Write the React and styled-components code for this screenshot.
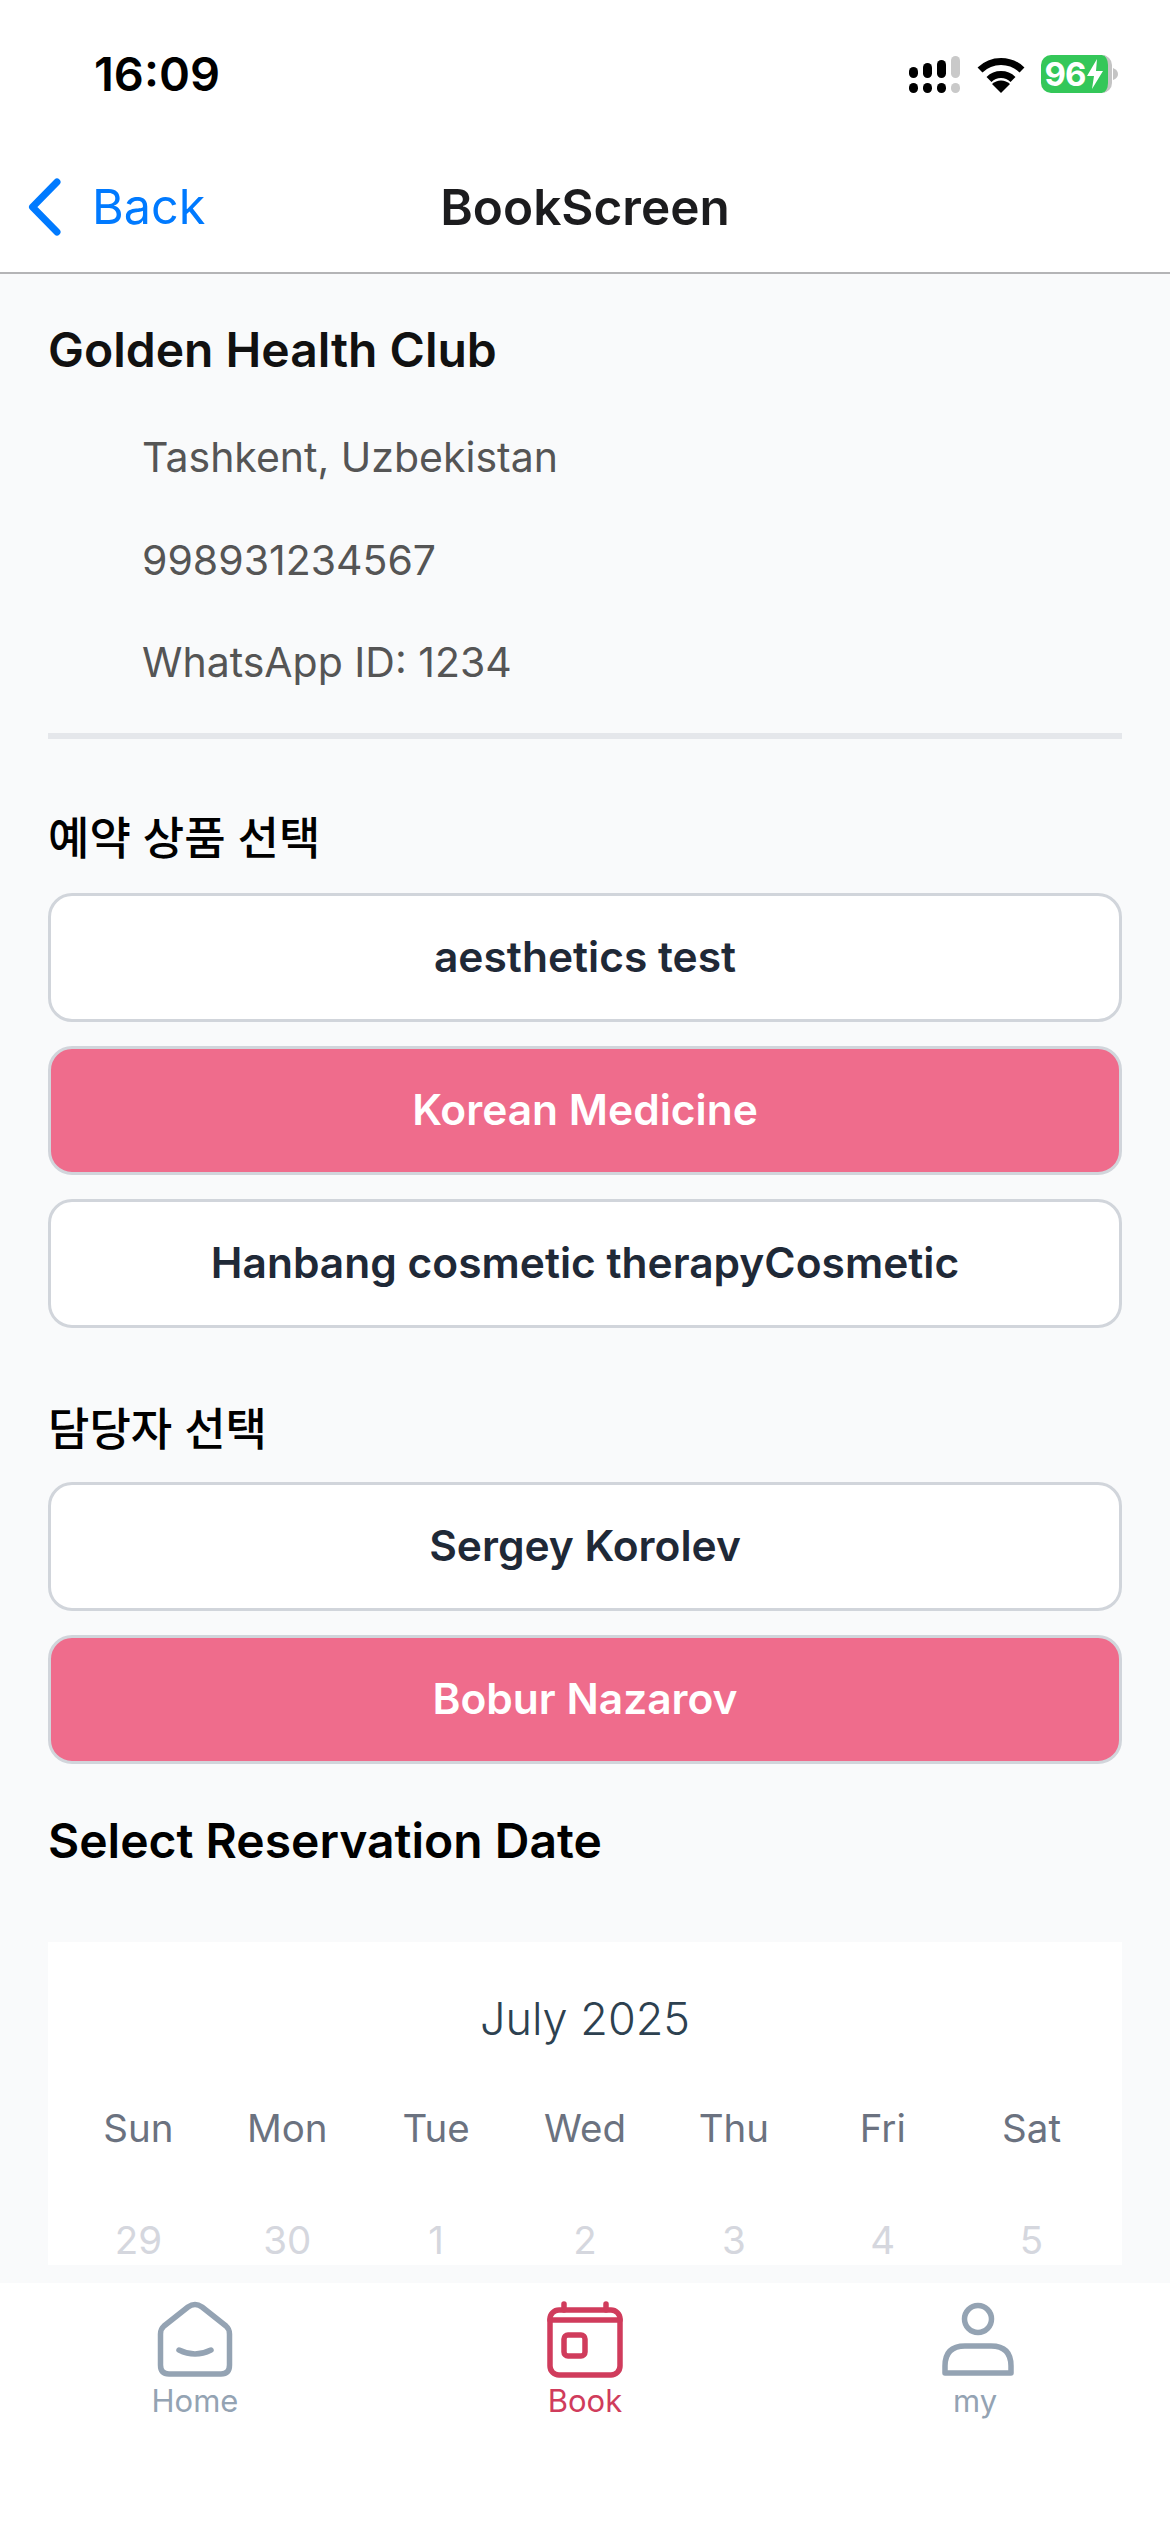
import React from "react";
import styled, { createGlobalStyle } from "styled-components";

const GlobalStyle = createGlobalStyle`
  * { box-sizing: border-box; }
  html, body { margin: 0; padding: 0; background: #fff; }
  body { font-family: Inter, "Noto Sans CJK KR", sans-serif; }
`;

const Screen = styled.div`
  width: 1170px;
  height: 2532px;
  display: flex;
  flex-direction: column;
  background: #fff;
  overflow: hidden;
`;

const StatusBar = styled.div`
  height: 148px;
  flex-shrink: 0;
  display: flex;
  justify-content: space-between;
  align-items: flex-start;
  padding: 48px 55px 0 94px;
`;

const Time = styled.span`
  font-size: 47px;
  line-height: 52px;
  font-weight: 600;
  color: #000;
`;

const StatusIcons = styled.div`
  display: flex;
  align-items: center;
  height: 52px;
  gap: 16px;
  margin-right: -3px;
`;

const Battery = styled.div`
  width: 71px;
  height: 38px;
  display: flex;
  align-items: center;
  justify-content: center;
  gap: 1px;
  margin-right: -15px;
  border-radius: 10px;
  border-right: 4px solid #c4c4c4;
  background: #34c759;
  color: #fff;
  font-size: 33px;
  font-weight: 700;
  line-height: 38px;
  letter-spacing: -1px;
`;

const NavBar = styled.div`
  height: 126px;
  flex-shrink: 0;
  display: flex;
  align-items: center;
  position: relative;
  border-bottom: 2px solid #b4b4b6;
  padding: 0 0 7px 28px;
`;

const BackLink = styled.div`
  display: flex;
  align-items: center;
  gap: 31px;
  color: #007aff;
  font-size: 48.500px;
  line-height: 60px;
`;

const NavTitle = styled.div`
  position: absolute;
  left: 0;
  right: 0;
  top: 29px;
  text-align: center;
  font-size: 49.500px;
  line-height: 60px;
  font-weight: 600;
  color: #1c1c1e;
`;

const Main = styled.main`
  flex: 1;
  min-height: 0;
  overflow: hidden;
  background: #f9fafb;
  padding: 46px 48px 0;
`;

const ClubName = styled.h1`
  margin: 0 0 50px;
  font-size: 48px;
  line-height: 60px;
  font-weight: 600;
  color: #111;
`;

const InfoRow = styled.div`
  padding-left: 94px;
  margin-bottom: 48.500px;
  font-size: 41px;
  line-height: 54px;
  color: #555;
`;

const Divider = styled.hr`
  margin: -4.500px 0 0;
  border: 0;
  height: 6px;
  background: #e5e7eb;
`;

const SectionTitle = styled.h2`
  margin: ${(p) => p.$top}px 0 ${(p) => p.$bottom}px;
  font-size: ${(p) => p.$size}px;
  line-height: 60px;
  font-weight: ${(p) => p.$weight};
  color: #000;
`;

const OptionList = styled.div`
  display: flex;
  flex-direction: column;
  gap: 24px;
`;

const OptionButton = styled.button`
  display: block;
  width: 100%;
  height: 129px;
  padding: 0 0 3px;
  border: 3px solid #d1d5db;
  border-radius: 24px;
  background: ${(p) => (p.$selected ? "#ef6c8c" : "#fff")};
  color: ${(p) => (p.$selected ? "#fff" : "#1f2937")};
  font-family: inherit;
  font-size: 42.500px;
  font-weight: 600;
`;

const Calendar = styled.section`
  margin-top: 71px;
  padding: 47px 16px 0;
  background: #fff;
`;

const MonthTitle = styled.div`
  text-align: center;
  font-size: 45px;
  line-height: 60px;
  font-weight: 300;
  color: #2d4150;
`;

const WeekGrid = styled.div`
  display: grid;
  grid-template-columns: repeat(7, 1fr);
  margin-top: ${(p) => p.$top}px;
  text-align: center;
  font-size: 38.500px;
  line-height: 50px;
  color: ${(p) => p.$color};
`;

const TabBar = styled.nav`
  height: 249px;
  flex-shrink: 0;
  display: grid;
  grid-template-columns: repeat(3, 1fr);
  align-items: start;
  padding-top: 19px;
  background: #fff;
`;

const Tab = styled.div`
  display: flex;
  flex-direction: column;
  align-items: center;
  color: ${(p) => (p.$active ? "#d03c5c" : "#94a3b3")};
  font-size: 31px;
  line-height: 36px;
  font-weight: 400;
`;

const TabIcon = styled.svg`
  width: 76px;
  height: 76px;
  margin-bottom: 5px;
  overflow: visible;
  fill: none;
  stroke: currentColor;
  stroke-width: 5.500;
  stroke-linecap: round;
  stroke-linejoin: round;
`;

const SignalIcon = () => (
  <svg width="52" height="38" viewBox="0 0 52 38">
    <rect x="0" y="12" width="9" height="11" rx="4.500" fill="#000" />
    <rect x="14" y="8" width="9" height="15" rx="4.500" fill="#000" />
    <rect x="28" y="5" width="9" height="18" rx="4.500" fill="#000" />
    <rect x="42" y="1" width="9" height="22" rx="4.500" fill="#c9c9c9" />
    <rect x="0" y="28" width="9" height="10" rx="4.500" fill="#000" />
    <rect x="14" y="28" width="9" height="10" rx="4.500" fill="#000" />
    <rect x="28" y="28" width="9" height="10" rx="4.500" fill="#000" />
    <rect x="42" y="28" width="9" height="10" rx="4.500" fill="#c9c9c9" />
  </svg>
);

const WifiIcon = () => (
  <svg width="48" height="37" viewBox="0 0 48 37" fill="none">
    <path d="M3 14 A30 30 0 0 1 45 14" stroke="#000" strokeWidth="7" />
    <path d="M12 23.500 A17 17 0 0 1 36 23.500" stroke="#000" strokeWidth="7" />
    <path d="M24 37 L15 28 A13 13 0 0 1 33 28 Z" fill="#000" />
  </svg>
);

const BoltIcon = () => (
  <svg width="18" height="30" viewBox="0 0 18 30">
    <path d="M11 0 L1 17 H8 L6 30 L17 12 H10 Z" fill="#fff" />
  </svg>
);

const BatteryNub = () => (
  <svg width="5" height="12" viewBox="0 0 5 12">
    <path d="M0 0 Q5 2 5 6 Q5 10 0 12 Z" fill="#c4c4c4" />
  </svg>
);

const ChevronLeft = () => (
  <svg width="33" height="58" viewBox="0 0 33 58" fill="none">
    <path d="M29 4 L4.500 29 L29 54" stroke="#007aff" strokeWidth="7" strokeLinecap="round" strokeLinejoin="round" />
  </svg>
);

const HomeIcon = () => (
  <TabIcon viewBox="0 0 76 76">
    <path d="M31 5 L7 24 Q3.500 27 3.500 32 V63 Q3.500 72 12 72 H64 Q72.500 72 72.500 63 V32 Q72.500 27 69 24 L45 5 Q38 0 31 5 Z" />
    <path d="M22 48 Q38 56 54 48" />
  </TabIcon>
);

const BookIcon = () => (
  <TabIcon viewBox="0 0 76 76">
    <rect x="3" y="8" width="70" height="65" rx="9" />
    <path d="M3 18 H73" />
    <path d="M17 2 V8 M59 2 V8" />
    <rect x="17" y="33" width="21" height="21" rx="4" />
  </TabIcon>
);

const PersonIcon = () => (
  <TabIcon viewBox="-5 0 76 76">
    <circle cx="36" cy="17" r="13.500" />
    <path d="M3 71 V64 Q3 44 23 44 H49 Q69 44 69 64 V71 Z" />
  </TabIcon>
);

const services = [
  { name: "aesthetics test" },
  { name: "Korean Medicine", selected: true },
  { name: "Hanbang cosmetic therapyCosmetic" },
];

const staff = [
  { name: "Sergey Korolev" },
  { name: "Bobur Nazarov", selected: true },
];

const weekDays = ["Sun", "Mon", "Tue", "Wed", "Thu", "Fri", "Sat"];
const firstWeek = [29, 30, 1, 2, 3, 4, 5];

const Options = ({ items }) => (
  <OptionList>
    {items.map((item) => (
      <OptionButton key={item.name} $selected={item.selected}>
        {item.name}
      </OptionButton>
    ))}
  </OptionList>
);

export default function App() {
  return (
    <Screen>
      <GlobalStyle />
      <StatusBar>
        <Time>16:09</Time>
        <StatusIcons>
          <SignalIcon />
          <WifiIcon />
          <Battery>
            96
            <BoltIcon />
          </Battery>
          <BatteryNub />
        </StatusIcons>
      </StatusBar>

      <NavBar>
        <BackLink>
          <ChevronLeft />
          Back
        </BackLink>
        <NavTitle>BookScreen</NavTitle>
      </NavBar>

      <Main>
        <ClubName>Golden Health Club</ClubName>
        <InfoRow>Tashkent, Uzbekistan</InfoRow>
        <InfoRow>998931234567</InfoRow>
        <InfoRow>WhatsApp ID: 1234</InfoRow>
        <Divider />

        <SectionTitle $top={70} $bottom={24} $size={45} $weight={500}>예약 상품 선택</SectionTitle>
        <Options items={services} />

        <SectionTitle $top={72} $bottom={22} $size={45} $weight={500}>담당자 선택</SectionTitle>
        <Options items={staff} />

        <SectionTitle $top={47} $bottom={0} $size={48} $weight={600}>Select Reservation Date</SectionTitle>
        <Calendar>
          <MonthTitle>July 2025</MonthTitle>
          <WeekGrid $top={54} $color="#6b7280">
            {weekDays.map((day) => (
              <span key={day}>{day}</span>
            ))}
          </WeekGrid>
          <WeekGrid $top={62} $color="#d5d7de">
            {firstWeek.map((date) => (
              <span key={date}>{date}</span>
            ))}
          </WeekGrid>
        </Calendar>
      </Main>

      <TabBar>
        <Tab>
          <HomeIcon />
          Home
        </Tab>
        <Tab $active>
          <BookIcon />
          Book
        </Tab>
        <Tab>
          <PersonIcon />
          my
        </Tab>
      </TabBar>
    </Screen>
  );
}
